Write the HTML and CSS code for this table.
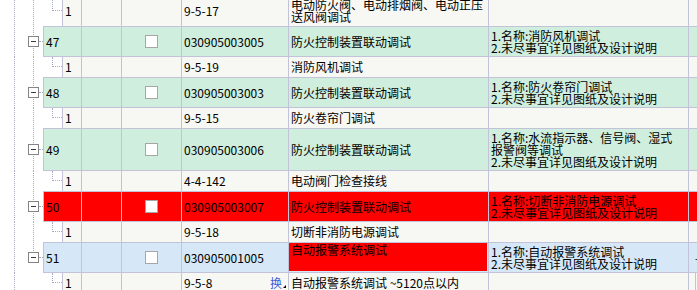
FILE: index.html
```html
<!DOCTYPE html>
<html lang="zh-CN">
<head>
<meta charset="utf-8">
<title>清单</title>
<link rel="stylesheet" href="styles.css">
</head>
<body>
<div class="grid">
  <div class="row child tall">
    <div class="tree"><span class="conn"></span></div>
    <div class="cell num">1</div>
    <div class="cell blank"></div>
    <div class="cell chk"></div>
    <div class="cell code">9-5-17</div>
    <div class="cell name">电动防火阀、电动排烟阀、电动正压<br>送风阀调试</div>
    <div class="cell desc"></div>
    <div class="cell extra"></div>
  </div>

  <div class="row item green">
    <div class="tree"><span class="toggle"><span class="minus"></span></span><span class="hdot"></span></div>
    <div class="cell num">47</div>
    <div class="cell blank"></div>
    <div class="cell chk"><span class="checkbox"></span></div>
    <div class="cell code">030905003005</div>
    <div class="cell name">防火控制装置联动调试</div>
    <div class="cell desc">1.名称:消防风机调试<br>2.未尽事宜详见图纸及设计说明</div>
    <div class="cell extra"></div>
  </div>
  <div class="row child">
    <div class="tree"><span class="conn"></span></div>
    <div class="cell num">1</div>
    <div class="cell blank"></div>
    <div class="cell chk"></div>
    <div class="cell code">9-5-19</div>
    <div class="cell name">消防风机调试</div>
    <div class="cell desc"></div>
    <div class="cell extra"></div>
  </div>

  <div class="row item green">
    <div class="tree"><span class="toggle"><span class="minus"></span></span><span class="hdot"></span></div>
    <div class="cell num">48</div>
    <div class="cell blank"></div>
    <div class="cell chk"><span class="checkbox"></span></div>
    <div class="cell code">030905003003</div>
    <div class="cell name">防火控制装置联动调试</div>
    <div class="cell desc">1.名称:防火卷帘门调试<br>2.未尽事宜详见图纸及设计说明</div>
    <div class="cell extra"></div>
  </div>
  <div class="row child">
    <div class="tree"><span class="conn"></span></div>
    <div class="cell num">1</div>
    <div class="cell blank"></div>
    <div class="cell chk"></div>
    <div class="cell code">9-5-15</div>
    <div class="cell name">防火卷帘门调试</div>
    <div class="cell desc"></div>
    <div class="cell extra"></div>
  </div>

  <div class="row item green high">
    <div class="tree"><span class="toggle"><span class="minus"></span></span><span class="hdot"></span></div>
    <div class="cell num">49</div>
    <div class="cell blank"></div>
    <div class="cell chk"><span class="checkbox"></span></div>
    <div class="cell code">030905003006</div>
    <div class="cell name">防火控制装置联动调试</div>
    <div class="cell desc">1.名称:水流指示器、信号阀、湿式<br>报警阀等调试<br>2.未尽事宜详见图纸及设计说明</div>
    <div class="cell extra"></div>
  </div>
  <div class="row child">
    <div class="tree"><span class="conn"></span></div>
    <div class="cell num">1</div>
    <div class="cell blank"></div>
    <div class="cell chk"></div>
    <div class="cell code">4-4-142</div>
    <div class="cell name">电动阀门检查接线</div>
    <div class="cell desc"></div>
    <div class="cell extra"></div>
  </div>

  <div class="row item red">
    <div class="tree"><span class="toggle"><span class="minus"></span></span><span class="hdot"></span></div>
    <div class="cell num">50</div>
    <div class="cell blank"></div>
    <div class="cell chk"><span class="checkbox"></span></div>
    <div class="cell code">030905003007</div>
    <div class="cell name">防火控制装置联动调试</div>
    <div class="cell desc">1.名称:切断非消防电源调试<br>2.未尽事宜详见图纸及设计说明</div>
    <div class="cell extra"></div>
  </div>
  <div class="row child">
    <div class="tree"><span class="conn"></span></div>
    <div class="cell num">1</div>
    <div class="cell blank"></div>
    <div class="cell chk"></div>
    <div class="cell code">9-5-18</div>
    <div class="cell name">切断非消防电源调试</div>
    <div class="cell desc"></div>
    <div class="cell extra"></div>
  </div>

  <div class="row item blue">
    <div class="tree last"><span class="toggle"><span class="minus"></span></span><span class="hdot"></span></div>
    <div class="cell num">51</div>
    <div class="cell blank"></div>
    <div class="cell chk"><span class="checkbox"></span></div>
    <div class="cell code">030905001005</div>
    <div class="cell name editing"><div class="editbox">自动报警系统调试</div></div>
    <div class="cell desc">1.名称:自动报警系统调试<br>2.未尽事宜详见图纸及设计说明</div>
    <div class="cell extra"><span class="mark">-</span></div>
  </div>
  <div class="row child">
    <div class="tree end"><span class="conn"></span></div>
    <div class="cell num">1</div>
    <div class="cell blank"></div>
    <div class="cell chk"></div>
    <div class="cell code split"><span>9-5-8</span><span class="swap">换</span><span class="corner"></span></div>
    <div class="cell name">自动报警系统调试 ~5120点以内</div>
    <div class="cell desc"></div>
    <div class="cell extra"><span class="subcol"></span></div>
  </div>
</div>
</body>
</html>
```

FILE: styles.css
```css
html, body {
  margin: 0;
  padding: 0;
  background: #ffffff;
  overflow: hidden;
}

body {
  font-family: "Noto Sans CJK SC", "Liberation Sans", sans-serif;
  font-size: 12px;
  color: #000000;
}

.grid {
  margin-top: -4px;
  display: flex;
  flex-direction: column;
}

.row {
  display: flex;
  flex: none;
}

.row.child { height: 20px; background: #f7f7f3; }
.row.child.tall { height: 30px; }
.row.item { height: 31px; }
.row.item.high { height: 43px; }

.row.green { background: #cfeede; }
.row.red { background: #ff0000; }
.row.blue { background: #d6e8f8; }

/* tree column */
.tree {
  flex: none;
  display: flex;
  background-color: #ffffff;
  background-image:
    repeating-linear-gradient(to bottom, #a9a9c4 0 1px, transparent 1px 2px),
    repeating-linear-gradient(to bottom, #a9a9c4 0 1px, transparent 1px 2px);
  background-position: 14px 0, 33px 0;
  background-size: 1px 100%, 1px 100%;
  background-repeat: no-repeat;
}

.tree.last {
  background-size: 1px 100%, 1px 50%;
}

.tree.end {
  background-image:
    repeating-linear-gradient(to bottom, #a9a9c4 0 1px, transparent 1px 2px);
  background-position: 14px 0;
  background-size: 1px 100%;
}

.item .tree {
  width: 43px;
  align-items: center;
  padding-left: 28px;
  box-sizing: border-box;
}

.child .tree {
  width: 62px;
  align-items: flex-start;
  padding-left: 52px;
  box-sizing: border-box;
}

.toggle {
  width: 11px;
  height: 11px;
  box-sizing: border-box;
  border: 1px solid #848484;
  background: #ffffff;
  display: flex;
  align-items: center;
  justify-content: center;
}

.minus {
  width: 5px;
  height: 1px;
  background: #3c3c3c;
}

.hdot {
  width: 4px;
  border-top: 1px dotted #a9a9c4;
}

.conn {
  width: 10px;
  height: 50%;
  box-sizing: border-box;
  border-left: 1px dotted #a9a9c4;
  border-bottom: 1px dotted #a9a9c4;
}

/* cells */
.cell {
  flex: none;
  box-sizing: border-box;
  display: flex;
  align-items: center;
  padding: 0 2px;
  line-height: 12px;
  white-space: nowrap;
  border-right: 1px solid #c2c2d8;
}

.item .cell {
  border-top: 1px solid #c2c2d8;
  border-bottom: 1px solid #c2c2d8;
}

.num { border-left: 1px solid #c2c2d8; }
.item .num { width: 39px; }
.child .num { width: 20px; }

.blank { width: 40px; }
.chk { width: 60px; justify-content: center; }
.code { width: 107px; }
.name { width: 200px; }
.desc { width: 200px; }
.extra { flex: 1; border-right: none; }

.checkbox {
  width: 13px;
  height: 13px;
  box-sizing: border-box;
  border: 1px solid #a6a6a6;
  background: #ffffff;
}

.name.editing {
  padding: 0;
  align-items: stretch;
}

.editbox {
  flex: 1;
  margin: 0 1px 1px 0;
  padding: 1px 2px;
  background: #ff0000;
}

.code.split {
  padding-right: 2px;
}

.code.split span:first-child {
  flex: 1;
}

.swap {
  color: #3a5ede;
}

.corner {
  width: 0;
  height: 0;
  border-left: 3px solid transparent;
  border-bottom: 3px solid #000000;
  align-self: center;
  margin-top: 6px;
  margin-left: 1px;
}

.mark {
  padding-left: 4px;
  font-size: 10px;
}

.extra:has(.subcol) {
  padding: 0;
  align-items: stretch;
}

.subcol {
  width: 6px;
  border-right: 1px solid #c2c2d8;
}
```
